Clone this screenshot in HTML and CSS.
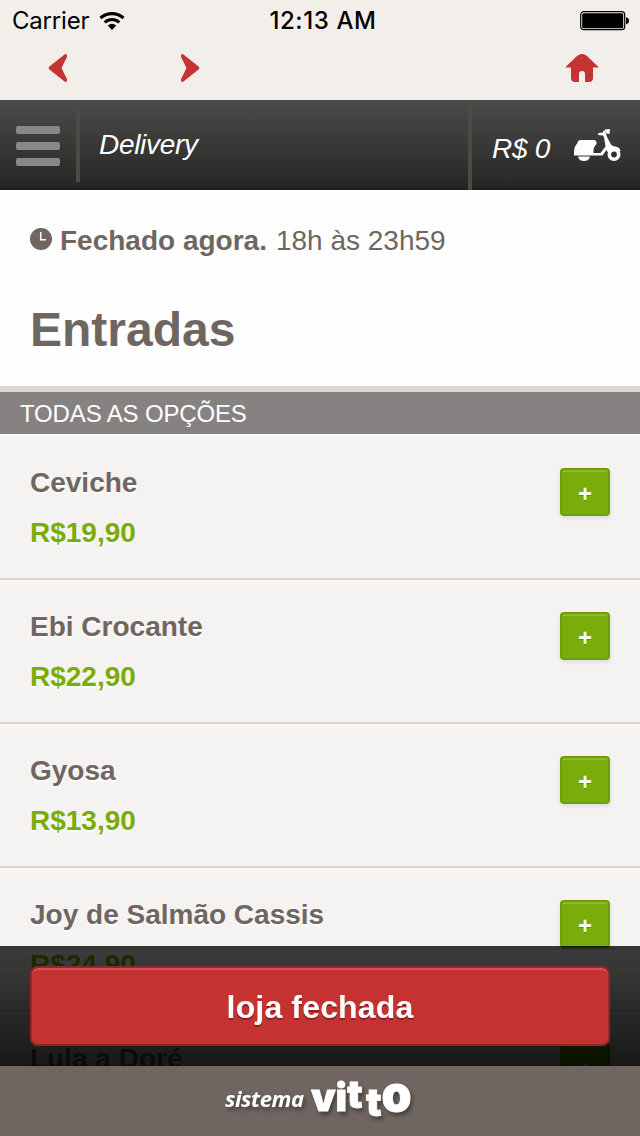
FILE: index.html
```html
<!DOCTYPE html>
<html lang="pt-BR">
<head>
<meta charset="UTF-8">
<meta name="viewport" content="width=device-width, initial-scale=1">
<title>Delivery - Entradas</title>
<link rel="stylesheet" href="styles.css">
</head>
<body>

<div class="status">
  <div class="carrier">
    <span>Carrier</span>
    <svg class="wifi" width="26" height="18" viewBox="0 0 26 18">
      <path d="M1.500 6C8 .2 18 .2 24.500 6" fill="none" stroke="#000" stroke-width="3.200"/>
      <path d="M5.700 10.500C10 6.600 16 6.600 20.300 10.500" fill="none" stroke="#000" stroke-width="3"/>
      <path d="M8.800 13.500Q13 10 17.200 13.500L13 18Z"/>
    </svg>
  </div>
  <div class="clock">12:13 AM</div>
  <svg class="battery" width="50" height="20" viewBox="0 0 50 20">
    <rect x=".7" y=".7" width="44" height="18" rx="3" fill="none" stroke="#000" stroke-width="1.200"/>
    <rect x="2.200" y="2.200" width="41" height="15" rx="1.500"/>
    <path d="M46 6.200C50 7 50 12.400 46 13.200Z"/>
  </svg>
</div>

<div class="browser">
  <svg width="20" height="30" viewBox="0 0 20 30"><path d="M.8 14V16L16.500 28.500Q18.500 29.500 19 28V26L13.500 15L19 4V2Q18.500 .3 16.500 1.500Z"/></svg>
  <svg class="forward" width="20" height="30" viewBox="0 0 20 30"><path d="M19.200 14V16L3.500 28.500Q1.500 29.500 1 28V26L6.500 15L1 4V2Q1.500 .3 3.500 1.500Z"/></svg>
  <svg class="home" width="36" height="30" viewBox="0 0 36 30"><path d="M1 14.500L13 3Q18 -1 23 3L35 14.500H29V25Q29 29 25 29H21V21Q21 18 18 18T15 21V29H11Q7 29 7 25V14.500Z"/></svg>
</div>

<header class="header">
  <div class="menu"><i></i><i></i><i></i></div>
  <div class="title">Delivery</div>
  <div class="cart">
    <span>R$ 0</span>
    <svg class="scooter" width="48" height="34" viewBox="0 0 48 34">
      <path d="M4.500 15Q4.500 12 8 12H20.500Q24 12 23.500 16Q20 19 20.500 25H27.500L32.500 18.500L31 9L30 7.500L25 7L25.500 5L30 4.500Q29.500 2.500 32 2.500L34 9L38 16.500Q39 18 42 18.500Q47 19 47.500 23L41 26L34.500 24L33.500 22L29.500 27.500H1V24Q1 18.500 4.500 15Z"/>
      <path d="M31.500 1.500L37 1L36.500 6L33.500 5.500Z"/>
      <path d="M5 28.500H17Q16 33 11 33T5 28.500Z"/>
      <circle cx="41" cy="26.500" r="6.500"/>
      <circle cx="41" cy="26.500" r="2.900" fill="#323231"/>
    </svg>
  </div>
</header>

<section class="intro">
  <div class="hours">
    <svg width="22" height="22" viewBox="0 0 22 22"><circle cx="11" cy="11" r="11" fill="#706661"/><path d="M10.700 4V11.800H16" fill="none" stroke="#fff" stroke-width="1.500"/></svg>
    <b>Fechado agora.</b>
    <span>18h às 23h59</span>
  </div>
  <h1>Entradas</h1>
</section>

<h2 class="section">TODAS AS OPÇÕES</h2>

<ul class="items">
  <li>
    <div><h3>Ceviche</h3><p class="price">R$19,90</p></div>
    <button class="add">+</button>
  </li>
  <li>
    <div><h3>Ebi Crocante</h3><p class="price">R$22,90</p></div>
    <button class="add">+</button>
  </li>
  <li>
    <div><h3>Gyosa</h3><p class="price">R$13,90</p></div>
    <button class="add">+</button>
  </li>
  <li>
    <div><h3>Joy de Salmão Cassis</h3><p class="price">R$24,90</p></div>
    <button class="add">+</button>
  </li>
  <li>
    <div><h3>Lula a Doré</h3><p class="price"></p></div>
    <button class="add">+</button>
  </li>
</ul>

<div class="dock">
  <div class="checkout">
    <button class="closed">loja fechada</button>
  </div>
  <footer class="brand">
    <svg width="200" height="70" viewBox="0 0 200 70">
      <text class="sistema" x="5" y="41" textLength="79">sistema</text>
      <text class="vitto"><tspan x="91" y="45">v</tspan><tspan x="115.500" y="45">i</tspan><tspan x="127" y="41.500">t</tspan><tspan x="146" y="49.500">t</tspan><tspan class="big" x="161.500" y="45">o</tspan></text>
    </svg>
  </footer>
</div>

</body>
</html>
```
FILE: styles.css
```css
* {
  box-sizing: border-box;
}

body {
  margin: 0;
  height: 1136px;
  overflow: hidden;
  background: #f4f3f1;
  color: #706661;
  font-family: "Liberation Sans", Arial, sans-serif;
}

h1, h2, h3, p, ul {
  margin: 0;
  padding: 0;
}

svg {
  display: block;
}

/* phone bars */
.status {
  display: grid;
  grid-template-columns: 1fr auto 1fr;
  align-items: center;
  height: 40px;
  padding: 1px 10px 0 12px;
  background: #f2efea;
  color: #000;
  font-family: Inter, sans-serif;
  font-size: 24px;
}

.carrier {
  display: flex;
  align-items: center;
  gap: 10px;
  letter-spacing: -0.2px;
}

.clock {
  padding-left: 4px;
  font-weight: 500;
  letter-spacing: 0.6px;
}

.battery {
  justify-self: end;
}

.browser {
  display: flex;
  height: 60px;
  padding: 13px 40px 0 48px;
  background: #f2efea;
  fill: #c53433;
}

.forward {
  margin-left: 112px;
}

.home {
  margin-left: auto;
}

/* header */
.header {
  display: flex;
  height: 90px;
  background: linear-gradient(#4b4b4b, #262625);
  border-bottom: 2px solid #211c1d;
  color: #fff;
  font-size: 28px;
  font-style: italic;
}

.menu {
  display: flex;
  flex-direction: column;
  gap: 8px;
  width: 80px;
  height: 72px;
  margin-top: 10px;
  padding: 16px;
  border-right: 4px solid #4f4843;
}

.menu i {
  width: 44px;
  height: 8px;
  border-radius: 2px;
  background: #888;
}

.title {
  padding: 29px 0 0 19px;
  letter-spacing: -0.3px;
}

.cart {
  display: flex;
  justify-content: space-between;
  width: 172px;
  height: 90px;
  margin-left: auto;
  padding: 33px 19px 0 20px;
  border-left: 4px solid #4f4843;
  letter-spacing: -0.3px;
}

.scooter {
  margin-top: -5px;
  fill: #fff;
}

/* intro */
.intro {
  height: 202px;
  padding: 35px 30px 0;
  background: #fefefe;
  border-bottom: 6px solid #ddd6cc;
}

.hours {
  display: flex;
  gap: 8px;
  font-size: 28px;
  line-height: 32px;
}

.hours svg {
  margin-top: 3px;
}

.hours span {
  margin-left: 1px;
}

h1 {
  margin-top: 45px;
  font-size: 48px;
  line-height: 56px;
}

.section {
  height: 44px;
  padding: 7px 20px 0;
  background: #868281;
  border-bottom: 2px solid #fff;
  color: #fff;
  font-size: 24px;
  font-weight: 400;
  line-height: 30px;
  letter-spacing: -0.15px;
}

/* list */
.items {
  list-style: none;
}

.items li {
  display: flex;
  justify-content: space-between;
  height: 144px;
  padding: 32px 30px 0;
  border-bottom: 2px solid #ddd6cc;
  box-shadow: 0 2px 0 #f9f8f7;
}

h3 {
  margin-top: -1px;
  font-size: 28px;
  line-height: 32px;
  text-shadow: 0 2px 0 #fff;
}

.price {
  margin-top: 18px;
  color: #7aac0a;
  font-size: 28px;
  font-weight: 700;
  line-height: 32px;
  text-shadow: 0 2px 0 #fff;
}

.add {
  width: 50px;
  height: 48px;
  padding: 4px 0 0;
  border: 2px solid #6d9f07;
  border-radius: 4px;
  background: #7aac0a;
  box-shadow: inset 0 2px 0 #8db735, 0 2px 4px rgba(0, 0, 0, 0.1);
  color: #fff;
  font: bold 24px "Liberation Sans", Arial, sans-serif;
  text-shadow: 0 1px 0 #55851f;
}

/* bottom dock, stays over the list */
.dock {
  position: fixed;
  right: 0;
  bottom: 0;
  left: 0;
}

.checkout {
  height: 120px;
  padding: 20px 30px;
  background: linear-gradient(rgba(0, 0, 0, 0.75), rgba(0, 0, 0, 0.9));
  box-shadow: inset 0 4px 0 rgba(0, 0, 0, 0.14);
}

.closed {
  width: 100%;
  height: 80px;
  padding: 2px 0 0;
  border: 2px solid #952526;
  border-radius: 8px;
  background: #c43332;
  box-shadow: inset 0 2px 0 #ce5352;
  color: #fff;
  font: bold 32px "Liberation Sans", Arial, sans-serif;
  letter-spacing: 0.15px;
  text-shadow: 0 2px 0 #8c2322;
}

.brand {
  display: flex;
  justify-content: center;
  height: 70px;
  background: #706661;
}

.brand svg {
  fill: #fff;
  filter: drop-shadow(2px 3px 2px rgba(0, 0, 0, 0.4));
}

.sistema {
  font: italic 700 22px "Open Sans", sans-serif;
}

.vitto {
  font: 900 39px Inter, sans-serif;
  stroke: #fff;
  stroke-width: 0.8px;
}

.vitto .big {
  font-size: 48px;
}
```
